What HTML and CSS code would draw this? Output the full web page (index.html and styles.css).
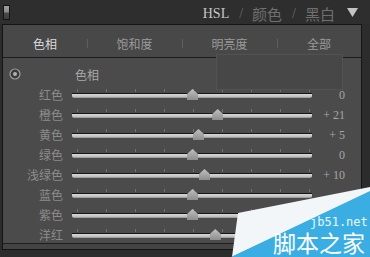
FILE: index.html
```html
<!DOCTYPE html>
<html lang="zh">
<head>
<meta charset="utf-8">
<link rel="stylesheet" href="styles.css">
</head>
<body>
<div class="page">
  <header class="top">
    <span class="grip"></span>
    <nav class="modes">
      <span class="mode on">HSL</span>
      <span class="slash">/</span>
      <span class="mode cjk">颜色</span>
      <span class="slash">/</span>
      <span class="mode cjk">黑白</span>
      <svg class="tri" width="11" height="9" viewBox="0 0 11 9"><polygon points="0,0 11,0 5.5,9" fill="#c4c4c4"/></svg>
    </nav>
  </header>

  <section class="panel">
    <div class="tabs">
      <div class="tab on">色相</div>
      <div class="tab">饱和度</div>
      <div class="tab">明亮度</div>
      <div class="tab">全部</div>
    </div>
    <div class="body">
      <div class="head">
        <svg class="target" width="12" height="12" viewBox="0 0 12 12">
          <circle cx="6" cy="6" r="5" fill="#3a3a3a" stroke="#9a9a9a" stroke-width="1.2"/>
          <circle cx="6" cy="6" r="2" fill="#b0b0b0"/>
        </svg>
        <span class="htitle">色相</span>
      </div>

      <div class="row"><span class="lbl">红色</span><div class="track"><i class="ticks"></i><b class="rail"></b><span class="thumb" style="left:50%"></span></div><span class="val">0</span></div>
      <div class="row"><span class="lbl">橙色</span><div class="track"><i class="ticks"></i><b class="rail"></b><span class="thumb" style="left:60.5%"></span></div><span class="val">+ 21</span></div>
      <div class="row"><span class="lbl">黄色</span><div class="track"><i class="ticks"></i><b class="rail"></b><span class="thumb" style="left:52.5%"></span></div><span class="val">+ 5</span></div>
      <div class="row"><span class="lbl">绿色</span><div class="track"><i class="ticks"></i><b class="rail"></b><span class="thumb" style="left:50%"></span></div><span class="val">0</span></div>
      <div class="row"><span class="lbl">浅绿色</span><div class="track"><i class="ticks"></i><b class="rail"></b><span class="thumb" style="left:55%"></span></div><span class="val">+ 10</span></div>
      <div class="row"><span class="lbl">蓝色</span><div class="track"><i class="ticks"></i><b class="rail"></b><span class="thumb" style="left:50%"></span></div><span class="val"></span></div>
      <div class="row"><span class="lbl">紫色</span><div class="track"><i class="ticks"></i><b class="rail"></b><span class="thumb" style="left:50%"></span></div><span class="val"></span></div>
      <div class="row"><span class="lbl">洋红</span><div class="track"><i class="ticks"></i><b class="rail"></b><span class="thumb" style="left:59.5%"></span></div><span class="val"></span></div>
    </div>
    <div class="foot"></div>
  </section>

  <div class="tip"></div>

  <div class="mark">
    <svg class="mark-bg" width="370" height="257" viewBox="0 0 370 257">
      <polygon points="232,257 238,213 370,187 370,192" fill="#f3f6f8"/>
      <polygon points="231,257 370,191 370,257" fill="#3aaee2"/>
    </svg>
    <span class="site">jb51.net</span>
    <span class="brand">脚本之家</span>
  </div>
</div>
</body>
</html>
```

FILE: styles.css
```css
* { box-sizing: border-box; margin: 0; padding: 0; }

html, body {
  width: 370px;
  height: 257px;
  overflow: hidden;
  background: #2c2c2c;
}

.page {
  position: relative;
  width: 370px;
  height: 257px;
  font-family: "Noto Sans CJK SC", "Liberation Sans", sans-serif;
}

/* ---------- top bar ---------- */
.top {
  height: 24px;
  display: flex;
  align-items: flex-start;
  justify-content: space-between;
  background: #2e2e2e;
}

.grip {
  width: 7px;
  height: 15px;
  margin: 5px 0 0 3px;
  border: 1px solid #141414;
  background: linear-gradient(#a0a0a0 0, #8a8a8a 45%, #4a4a4a 55%, #3c3c3c 100%);
}

.modes {
  display: flex;
  align-items: center;
  height: 22px;
  margin-top: 3px;
  padding-right: 12px;
  color: #7a7a7a;
}

.mode {
  font-family: "Liberation Serif", serif;
  font-size: 14px;
  line-height: 20px;
}
.mode.on { color: #c6c6c6; }
.mode.cjk {
  font-family: "Noto Sans CJK SC", sans-serif;
  font-size: 15px;
  color: #6f6f6f;
}

.slash {
  font-family: "Liberation Serif", serif;
  font-size: 14px;
  color: #6a6a6a;
  margin: 0 9px 0 10px;
}

.tri { margin-left: 12px; margin-top: -4px; }

/* ---------- panel ---------- */
.panel {
  margin: 0 8px 0 2px;
  height: 226px;
  border: 1px solid #151515;
  background: #4a4a4a;
  display: flex;
  flex-direction: column;
}

.tabs {
  height: 33px;
  display: grid;
  grid-template-columns: 84px 95px 95px 1fr;
  align-items: center;
  border-bottom: 1px solid #1c1c1c;
  background: #484848;
  padding-top: 5px;
}

.tab {
  position: relative;
  text-align: center;
  font-size: 12px;
  line-height: 16px;
  color: #9a9a9a;
}
.tab.on { color: #dadada; }
.tab + .tab::before {
  content: "";
  position: absolute;
  left: 0;
  top: 3px;
  width: 1px;
  height: 9px;
  background: #5e5e5e;
}

.body {
  flex: 1;
  padding-top: 6px;
  border-bottom: 1px solid #1e1e1e;
  overflow: hidden;
  background: #4b4b4b;
}

.foot {
  height: 5px;
  background: #444;
}

.head {
  height: 20px;
  display: flex;
  align-items: center;
}
.target { margin-left: 6px; }
.htitle {
  margin-left: 54px;
  font-size: 12px;
  color: #a8a8a8;
}

.row {
  height: 20px;
  display: grid;
  grid-template-columns: 60px 9px 240px 33px;
}
.row .lbl { grid-column: 1; }
.row .track { grid-column: 3; }
.row .val { grid-column: 4; }

.lbl {
  text-align: right;
  font-size: 12px;
  line-height: 20px;
  padding-top: 1px;
  color: #8c8c8c;
}

.val {
  text-align: right;
  font-family: "Liberation Serif", serif;
  font-size: 12px;
  line-height: 20px;
  padding-top: 1px;
  color: #a6a6a6;
}

.track {
  position: relative;
  height: 20px;
}

.ticks {
  position: absolute;
  left: 5px;
  top: 5px;
  width: 234px;
  height: 3px;
  background: repeating-linear-gradient(to right, #707070 0 1px, transparent 1px 29px);
}

.rail {
  position: absolute;
  left: 0;
  right: 0;
  top: 9px;
  height: 5px;
  border-top: 1px solid #161616;
  border-radius: 0 0 2px 2px;
  background: linear-gradient(#d8d8d8, #bdbdbd 70%, #8a8a8a);
}

.thumb {
  position: absolute;
  top: 5px;
  width: 11px;
  height: 11px;
  margin-left: -5px;
  background: linear-gradient(#c0c0c0, #8e8e8e);
  clip-path: polygon(50% 0, 100% 45%, 100% 100%, 0 100%, 0 45%);
}

/* ---------- overlay box ---------- */
.tip {
  position: absolute;
  left: 216px;
  top: 54px;
  width: 127px;
  height: 36px;
  background: #474747;
  border: 1px solid #525252;
}

/* ---------- watermark ---------- */
.mark {
  position: absolute;
  inset: 0;
  pointer-events: none;
}
.mark-bg { position: absolute; left: 0; top: 0; }
.site {
  position: absolute;
  left: 310px;
  top: 216px;
  font-family: "DejaVu Sans Mono", monospace;
  font-size: 12px;
  line-height: 12px;
  color: #eaf6fc;
}
.brand {
  position: absolute;
  left: 273px;
  top: 232px;
  font-family: "Liberation Sans", "Noto Sans CJK SC", sans-serif;
  font-size: 23px;
  line-height: 24px;
  white-space: nowrap;
  color: #ffffff;
}
```
